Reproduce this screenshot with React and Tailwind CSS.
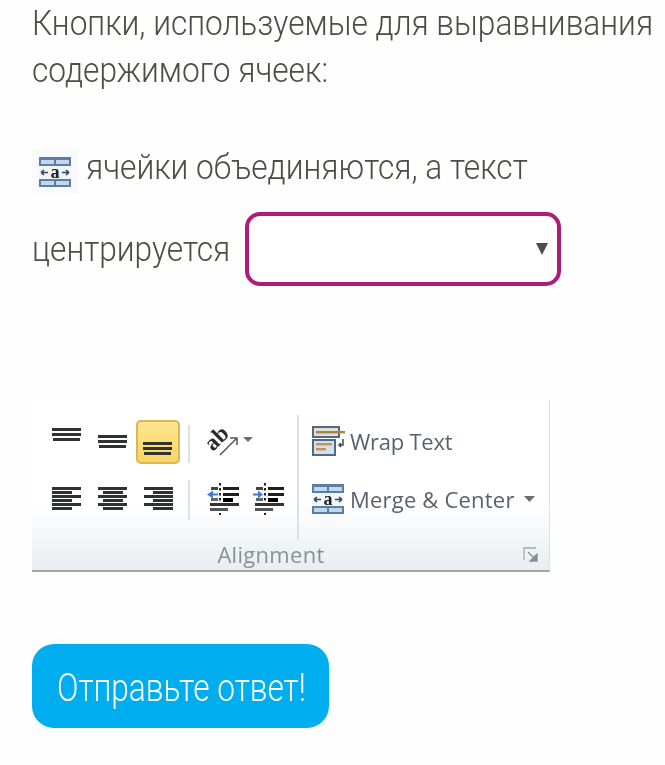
function Lines({ rows, h = 44 }) {
  return (
    <svg width="29" height={h} viewBox={`0 0 29 ${h}`} className="block">
      {rows.map(([x, y, w], i) => (
        <rect key={i} x={x} y={y} width={w} height="3" fill="#2f3133" />
      ))}
    </svg>
  );
}

function MergeIcon({ className }) {
  return (
    <svg viewBox="0 0 32 30" className={className}>
      <rect width="32" height="30" fill="#5b7ea4" />
      <rect x="2" y="3" width="13" height="4" fill="#c4d6ea" />
      <rect x="17" y="3" width="13" height="4" fill="#c4d6ea" />
      <rect x="2" y="24" width="13" height="4" fill="#c4d6ea" />
      <rect x="17" y="24" width="13" height="4" fill="#c4d6ea" />
      <rect x="0" y="9" width="32" height="13" fill="#f3f6f8" />
      <path d="M2 15.500h7M2 15.500l3-2.500M2 15.500l3 2.500M30 15.500h-7M30 15.500l-3-2.500M30 15.500l-3 2.500" stroke="#2f4257" strokeWidth="1.600" fill="none" />
      <text x="16" y="21" textAnchor="middle" fontFamily="Liberation Serif, serif" fontWeight="700" fontSize="18" fill="#1f1f1c">a</text>
    </svg>
  );
}

function WrapIcon() {
  return (
    <svg viewBox="0 0 34 30" className="w-[34px] h-[30px]">
      <rect x="1" y="1" width="26" height="10" fill="#e4e0d6" stroke="#4f6a88" strokeWidth="2" />
      <rect x="4" y="5" width="29" height="2.400" fill="#a8814e" />
      <rect x="1" y="14" width="22" height="15" fill="#d7e0ea" stroke="#4f6a88" strokeWidth="2" />
      <rect x="4" y="17" width="16" height="2.400" fill="#c29257" />
      <rect x="4" y="22" width="10" height="2.400" fill="#c29257" />
      <path d="M31 13v6h-4M29 17l-2 2 2 2" stroke="#3d4b5a" strokeWidth="1.500" fill="none" />
    </svg>
  );
}

function IndentIcon({ right }) {
  return (
    <svg width="35" height="32" viewBox="0 0 35 32" className="block">
      <path d="M15 0v32" stroke="#222" strokeWidth="2" strokeDasharray="2.500 2.500" />
      <rect x="18" y="4" width="16" height="3" fill="#1f1f1f" />
      <rect x="18" y="10" width="16" height="3" fill="#1f1f1f" />
      <rect x="18" y="15" width="10" height="4" fill="#000" />
      <rect x="5" y="20" width="29" height="3" fill="#333" />
      <rect x="5" y="25" width="18" height="3" fill="#555" />
      <rect x="6" y="4" width="7" height="3" fill="#444" />
      <rect x="6" y="15" width="7" height="3" fill="#666" />
      {right ? (
        <path d="M3 10.500h5v-3l5 4-5 4v-3H3z" fill="#3f7fd0" />
      ) : (
        <path d="M13 10.500H8v-3l-6 4 6 4v-3h5z" fill="#3f7fd0" />
      )}
    </svg>
  );
}

function OrientIcon() {
  return (
    <svg width="48" height="32" viewBox="0 0 48 32" className="block overflow-visible">
      <text transform="translate(8 25) rotate(-45)" fontFamily="Liberation Serif, serif" fontWeight="700" fontSize="23" fill="#2a2a2a">ab</text>
      <path d="M15 28L31 12M25 11h7v7" stroke="#555" strokeWidth="1.500" fill="none" />
      <path d="M38 10h10l-5 5z" fill="#6b6f75" />
    </svg>
  );
}

function RibbonPanel() {
  const triple = (y) => [[0, y, 29], [0, y + 5, 29], [1, y + 10, 27]];
  return (
    <div className="w-[518px] h-[172px] ml-8 flex flex-col border-b-2 border-r border-b-[#9fa5a9] border-r-[#dfe2e4] bg-gradient-to-b from-white from-60% to-[#e9eef0] blur-[0.6px] font-['Open_Sans',sans-serif] font-normal tracking-normal">
      <div className="flex h-[140px] pl-[20px]">
        <div className="flex flex-col w-[245px] pt-[20px]">
          <div className="flex h-[45px] items-start">
            <div className="w-[46px]"><Lines rows={triple(8)} /></div>
            <div className="w-[38px]"><Lines rows={triple(15)} /></div>
            <div className="w-[44px] h-[44px] pl-[5px] rounded-[5px] border-2 border-[#dcb45a] bg-gradient-to-b from-[#fde58e] to-[#fbd560]">
              <Lines h={40} rows={triple(20)} />
            </div>
            <div className="w-[2px] h-[38px] mt-[5px] ml-[8px] bg-[#dfe2e4]" />
            <div className="ml-[15px] mt-[7px]"><OrientIcon /></div>
          </div>
          <div className="flex h-[44px] items-start mt-[15px]">
            <div className="w-[46px]"><Lines rows={[[0, 7, 29], [0, 11, 20], [0, 15, 29], [0, 19, 20], [0, 23, 29], [0, 27, 20]]} /></div>
            <div className="w-[46px]"><Lines rows={[[0, 7, 29], [5, 11, 20], [0, 15, 29], [5, 19, 20], [0, 23, 29], [5, 27, 20]]} /></div>
            <div className="w-[36px]"><Lines rows={[[0, 7, 29], [9, 11, 20], [0, 15, 29], [9, 19, 20], [0, 23, 29], [9, 27, 20]]} /></div>
            <div className="w-[2px] h-[40px] ml-[8px] bg-[#dfe2e4]" />
            <div className="ml-[15px] mt-[3px] flex gap-[10px]">
              <IndentIcon />
              <IndentIcon right />
            </div>
          </div>
        </div>
        <div className="w-[2px] h-[125px] mt-[15px] bg-[#dde0e3]" />
        <div className="flex flex-col pl-[13px] pt-[26px]">
          <div className="flex items-center gap-[4px] h-[30px]">
            <WrapIcon />
            <span className="text-[22px] leading-none tracking-[-0.25px] text-[#59616b]">Wrap Text</span>
          </div>
          <div className="flex items-center gap-[6px] h-[30px] mt-[28px]">
            <MergeIcon className="w-[32px] h-[30px]" />
            <span className="text-[22px] leading-none tracking-[0.2px] text-[#59616b]">Merge &amp; Center</span>
            <svg width="11" height="6" viewBox="0 0 11 6" className="ml-[3px]"><path d="M0 0h11L5.500 6z" fill="#6b6f75" /></svg>
          </div>
        </div>
      </div>
      <div className="relative flex-1">
        <div className="text-center w-[478px] text-[22px] leading-[28px] tracking-[0.3px] text-[#8b9096]">Alignment</div>
        <svg width="16" height="16" viewBox="0 0 16 16" className="absolute right-[10px] top-[7px]">
          <path d="M1 13V1h12" stroke="#a3a8ad" strokeWidth="1.300" fill="none" />
          <path d="M5 5l8 8M14 7v7H7z" stroke="#888d93" strokeWidth="1.300" fill="#888d93" />
        </svg>
      </div>
    </div>
  );
}

export default function App() {
  return (
    <div className="w-[665px] h-[765px] overflow-hidden bg-[#fefefe] font-['Roboto',sans-serif] font-light text-[#4b4e42] text-[35px]">
      <div className="pl-8 leading-[47px] whitespace-nowrap">
        <p className="origin-left scale-x-[0.904]">Кнопки, используемые для выравнивания</p>
        <p className="origin-left scale-x-[0.904]">содержимого ячеек:</p>
      </div>
      <div className="flex items-center pl-8 mt-[55px] h-[45px]">
        <div className="w-[46px] h-[45px] bg-[#fafafa] flex items-center justify-center">
          <MergeIcon className="w-[32px] h-[30px]" />
        </div>
        <span className="ml-2 pb-[6px] origin-left scale-x-[0.904] whitespace-nowrap">ячейки объединяются, а текст</span>
      </div>
      <div className="flex items-center pl-8 mt-[18px] h-[74px]">
        <span className="w-[214px] pt-[2px] shrink-0 origin-left scale-x-[0.904] whitespace-nowrap">центрируется</span>
        <div className="w-[316px] h-[74px] -ml-px rounded-[15px] border-4 border-[#b01b7a] bg-white flex items-center justify-end pr-[9px]">
          <svg width="12" height="12" viewBox="0 0 12 12"><path d="M0 0h12L6 12z" fill="#4b4e42" /></svg>
        </div>
      </div>
      <div className="h-[114px]" />
      <RibbonPanel />
      <button className="block ml-8 mt-[72px] w-[297px] h-[84px] pt-1 rounded-[22px] bg-[#00aeef] text-white text-[38px] font-light">
        <span className="inline-block scale-x-[0.833] whitespace-nowrap">Отправьте ответ!</span>
      </button>
    </div>
  );
}
